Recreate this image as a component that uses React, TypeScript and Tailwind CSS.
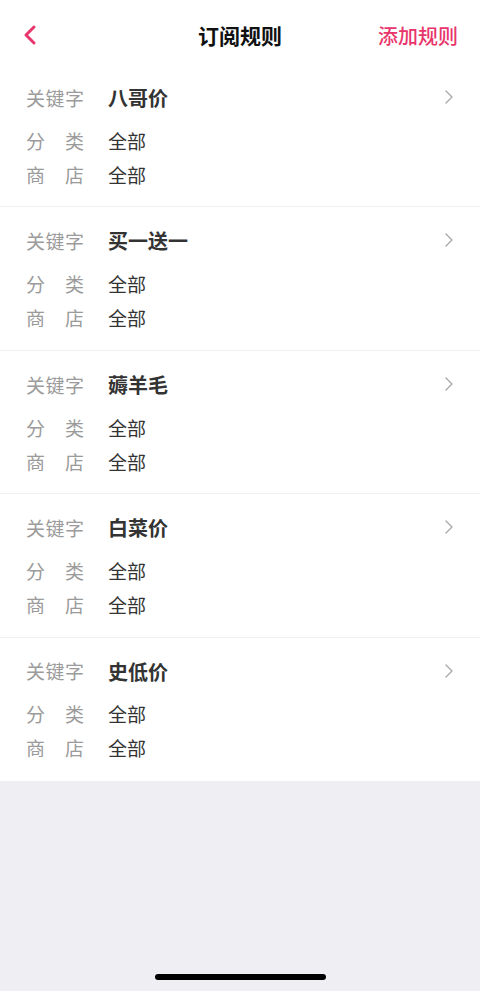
import React from "react";

const rules = ["八哥价", "买一送一", "薅羊毛", "白菜价", "史低价"];

function Label({ text }: { text: string }) {
  const chars = text.split("");
  return (
    <div className="w-[58px] flex justify-between text-[19px] text-[#9b9b9b]">
      {chars.map((c, i) => (
        <span key={i}>{c}</span>
      ))}
    </div>
  );
}

export default function App() {
  return (
    <div
      className="w-[480px] h-[991px] bg-[#efeef3] flex flex-col relative overflow-hidden"
      style={{ fontFamily: '"Noto Sans CJK SC", "Noto Sans", sans-serif' }}
    >
      <div className="bg-white h-[64px] flex items-center justify-between px-[22px] relative">
        <svg width="16" height="22" viewBox="0 0 16 22" className="mt-[6px]">
          <path d="M12 3 L4 11 L12 19" fill="none" stroke="#e8356b" strokeWidth="3" strokeLinecap="round" strokeLinejoin="round" />
        </svg>
        <div className="absolute left-0 right-0 top-0 h-[64px] flex items-center justify-center pointer-events-none">
          <span className="text-[21px] font-bold text-[#111] mt-[8px]">订阅规则</span>
        </div>
        <span className="text-[20px] text-[#e8356b] font-medium mt-[8px]">添加规则</span>
      </div>
      <div className="bg-white">
        {rules.map((r, i) => (
          <div
            key={i}
            className={`px-[26px] pt-[20px] pb-[18px] h-[143.4px] ${i < rules.length - 1 ? "border-b border-[#f0f0f0]" : ""}`}
          >
            <div className="flex items-center h-[28px]">
              <Label text="关键字" />
              <span className="ml-[24px] text-[20px] font-bold text-[#333]">{r}</span>
              <div className="flex-1" />
              <svg width="10" height="16" viewBox="0 0 10 16" className="mt-[-2px]">
                <path d="M2 2 L8 8 L2 14" fill="none" stroke="#a8a8a8" strokeWidth="1.3" strokeLinecap="round" strokeLinejoin="round" />
              </svg>
            </div>
            <div className="flex items-center h-[28px] mt-[15px]">
              <Label text="分类" />
              <span className="ml-[24px] text-[19px] text-[#333]">全部</span>
            </div>
            <div className="flex items-center h-[28px] mt-[6px]">
              <Label text="商店" />
              <span className="ml-[24px] text-[19px] text-[#333]">全部</span>
            </div>
          </div>
        ))}
      </div>
      <div className="absolute left-[155px] top-[974px] w-[171px] h-[6px] rounded-full bg-black" />
    </div>
  );
}
